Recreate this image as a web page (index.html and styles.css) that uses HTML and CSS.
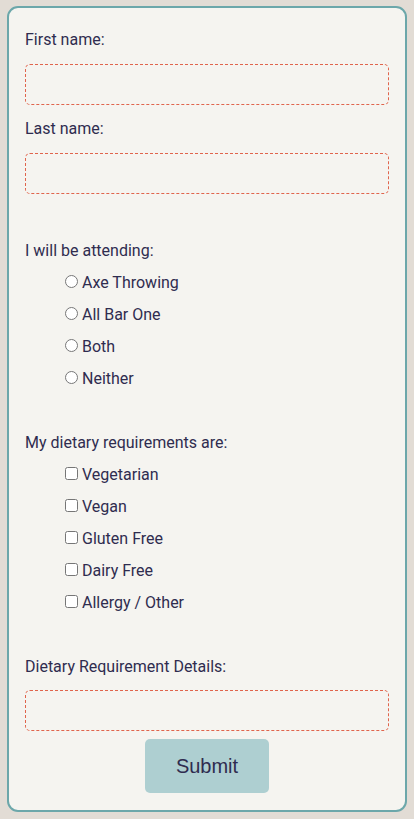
FILE: index.html
```html
<!DOCTYPE html>
<html lang="en">
<head>
<meta charset="utf-8">
<title>RSVP</title>
<link rel="stylesheet" href="styles.css">
</head>
<body>
<form class="card">
  <label class="field-label" for="first">First name:</label>
  <input class="text-input" id="first" type="text">
  <label class="field-label" for="last">Last name:</label>
  <input class="text-input" id="last" type="text">

  <div class="spacer"></div>
  <div class="row">I will be attending:</div>
  <label class="row option"><input type="radio" name="attend">Axe Throwing</label>
  <label class="row option"><input type="radio" name="attend">All Bar One</label>
  <label class="row option"><input type="radio" name="attend">Both</label>
  <label class="row option"><input type="radio" name="attend">Neither</label>

  <div class="spacer"></div>
  <div class="row">My dietary requirements are:</div>
  <label class="row option"><input type="checkbox">Vegetarian</label>
  <label class="row option"><input type="checkbox">Vegan</label>
  <label class="row option"><input type="checkbox">Gluten Free</label>
  <label class="row option"><input type="checkbox">Dairy Free</label>
  <label class="row option"><input type="checkbox">Allergy / Other</label>

  <div class="spacer"></div>
  <label class="field-label details-label" for="details">Dietary Requirement Details:</label>
  <input class="text-input last" id="details" type="text">
  <button class="submit" type="button">Submit</button>
</form>
</body>
</html>
```

FILE: styles.css
```css
html, body {
  margin: 0;
  padding: 0;
}
body {
  background: #e2dcd5;
  padding: 6px 7px 8px 7px;
  font-family: Roboto, "Liberation Sans", sans-serif;
  font-size: 16px;
  color: #2f2c4f;
}
.card {
  display: flex;
  flex-direction: column;
  box-sizing: border-box;
  width: 400px;
  background: #f5f4f0;
  border: 2px solid #6ca7aa;
  border-radius: 11px;
  padding: 21.5px 16px 17px 16px;
}
.field-label {
  display: block;
  line-height: normal;
  margin-bottom: 15px;
}
.details-label {
  margin-bottom: 14.5px;
}
.text-input {
  display: block;
  box-sizing: border-box;
  width: 100%;
  height: 41px;
  margin: 0 0 14.5px 0;
  background: transparent;
  border: 1px dashed #e0644c;
  border-radius: 5px;
  font: inherit;
  padding: 0 8px;
}
.text-input.last {
  margin-bottom: 8px;
}
.spacer {
  height: 32px;
}
.row {
  display: block;
  height: 32px;
  line-height: normal;
}
.option {
  padding-left: 35px;
}
.option input {
  margin: 0 4px 0 5px;
  width: 13px;
  height: 13px;
  vertical-align: baseline;
}
.submit {
  align-self: center;
  width: 124px;
  height: 54px;
  border: none;
  border-radius: 5px;
  background: #aecfd1;
  color: #2f2c4f;
  font-family: "Liberation Sans", Arial, sans-serif;
  font-size: 20px;
  padding: 0;
}
```
